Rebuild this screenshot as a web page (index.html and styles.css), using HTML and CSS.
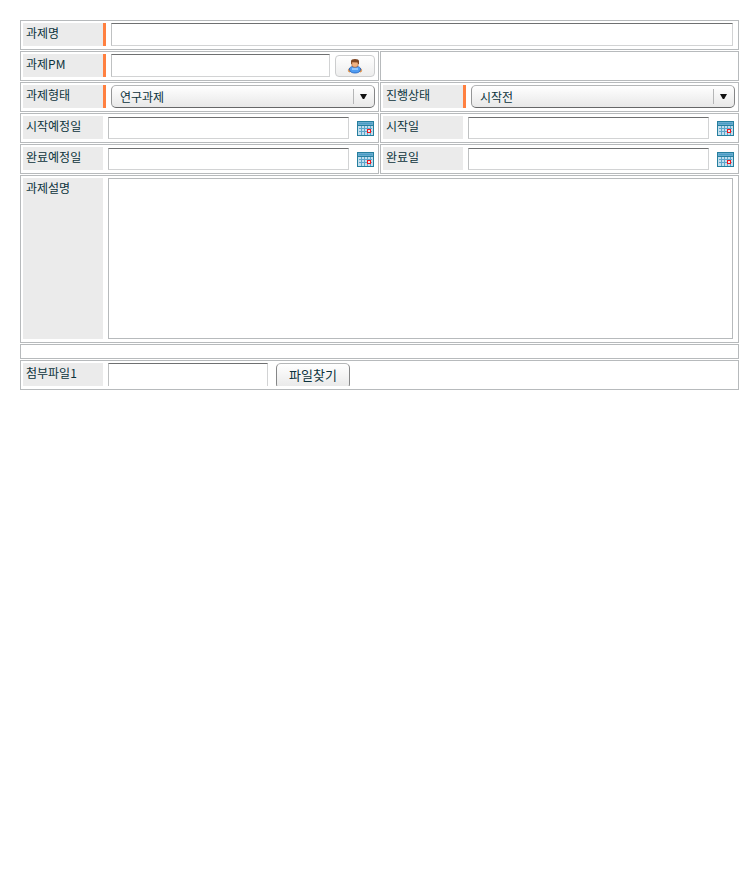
FILE: index.html
```
<!DOCTYPE html>
<html lang="ko">
<head>
<meta charset="utf-8">
<title>과제</title>
<link rel="stylesheet" href="styles.css">
</head>
<body>
<svg width="0" height="0" class="defs">
  <defs>
    <symbol id="calendar" viewBox="0 0 17 15" shape-rendering="crispEdges">
      <path fill="#267f9e" d="M0 0h17v15H0z"/>
      <path fill="#69acd0" d="M1 1h15v3H1z"/>
      <path fill="#4c9dc5" d="M2 2h13v1H2z"/>
      <path fill="#c3dfee" d="M1 5h15v9H1z"/>
      <path fill="#5da5ca" d="M4 5h1v9H4zM7 5h1v9H7zM10 5h1v9h-1zM13 5h1v9h-1zM2 7h13v1H2zM2 10h13v1H2z"/>
      <path fill="#f5151d" d="M10 8h4v4h-4z"/>
      <path fill="#e3eef4" d="M11 9h2v2h-2z"/>
    </symbol>
  </defs>
</svg>
<form class="form">
  <div class="cell wide"><label class="label required">과제명</label><input class="field" type="text"></div>

  <div class="cell"><label class="label required">과제PM</label><input class="field pm" type="text"><button class="person" type="button"><svg width="16" height="16" viewBox="0 0 16 16">
    <path fill="#f2a04e" stroke="#c2702c" stroke-width=".5" d="M1.300 12.500c0-1.300.8-2.200 1.800-2.400v4C2 14.200 1.300 13.600 1.300 12.500zM14.700 12.500c0-1.300-.8-2.200-1.800-2.400v4c1.100.1 1.800-.5 1.800-1.600z"/>
    <path fill="#4f9cf2" stroke="#2463bd" stroke-width=".8" d="M2.200 11C3 9.200 4.500 8.400 6 8.400h4c1.500 0 3 .8 3.800 2.600L13 13c-1 1.500-2.800 2-5 2s-4-.5-5-2z"/>
    <path fill="#8fc6ff" d="M5 10h6v2H5z"/>
    <path fill="#f0b180" stroke="#9a572b" stroke-width=".6" d="M4.800 4h6.400v2.500C11.200 8.300 10 9.300 8 9.300S4.800 8.300 4.800 6.500z"/>
    <path fill="#7f4622" d="M4 6V3.300C4 1.800 5.500 1 8 1s4 .8 4 2.300V6h-.9l-.5-1.800L5 4.100 4.800 6z"/>
  </svg></button></div>
  <div class="cell"></div>

  <div class="cell"><label class="label required">과제형태</label><div class="select"><span>연구과제</span><i class="arrow"></i></div></div>
  <div class="cell"><label class="label required">진행상태</label><div class="select"><span>시작전</span><i class="arrow"></i></div></div>

  <div class="cell"><label class="label">시작예정일</label><input class="field date" type="text"><svg class="cal"><use href="#calendar"/></svg></div>
  <div class="cell"><label class="label">시작일</label><input class="field date" type="text"><svg class="cal"><use href="#calendar"/></svg></div>

  <div class="cell"><label class="label">완료예정일</label><input class="field date" type="text"><svg class="cal"><use href="#calendar"/></svg></div>
  <div class="cell"><label class="label">완료일</label><input class="field date" type="text"><svg class="cal"><use href="#calendar"/></svg></div>

  <div class="cell wide"><label class="label">과제설명</label><textarea class="memo"></textarea></div>
  <div class="cell wide"></div>
  <div class="cell wide"><label class="label">첨부파일1</label><div class="upload"><input class="field file" type="text"><button class="browse" type="button">파일찾기</button></div></div>
</form>
</body>
</html>
```
FILE: styles.css
```
* { box-sizing: border-box; }
body {
  margin: 0;
  background: #fff;
  color: #0b333c;
  font: 12px/17px "Noto Sans CJK KR", sans-serif;
}
.defs { position: absolute; }
.form {
  width: 719px;
  margin: 20px 0 0 20px;
  display: grid;
  grid-template-columns: 359px 359px;
  grid-template-rows: repeat(5, 30px) 168px 15px 30px;
  gap: 1px;
}
.cell {
  display: flex;
  align-items: flex-start;
  border: 1px solid #b7babc;
  padding: 2px;
  min-width: 0;
}
.wide { grid-column: span 2; padding-right: 5px; }
.label {
  flex: none;
  align-self: stretch;
  width: 80px;
  max-height: 161px;
  margin: 0 5px 1px 0;
  padding: 1px 0 0 3px;
  background: #ebebeb;
  white-space: nowrap;
}
.required {
  width: 83px;
  border-right: 3px solid #ff8040;
}
.field, .memo {
  display: block;
  flex: 1;
  min-width: 0;
  height: 23px;
  margin: 0;
  padding: 2px 4px;
  border: 1px solid #d2d3d4;
  border-left-color: #bfc1c2;
  border-top-color: #6f7071;
  border-radius: 0;
  background: #fff;
  color: inherit;
  font: inherit;
  outline: none;
}
.pm { flex: none; width: 219px; }
.date { flex: none; width: 241px; height: 22px; margin-top: 1px; }
.memo { height: 161px; border-color: #b7babc; resize: none; }
.cal { width: 17px; height: 15px; margin: 5px 0 0 8px; }
.person {
  width: 40px;
  height: 22px;
  margin: 1px 0 0 5px;
  padding: 0 0 1px;
  display: flex;
  align-items: center;
  justify-content: center;
  border: 1px solid #cccdce;
  border-radius: 4px;
  background: linear-gradient(#fff, #ededed);
}
.select {
  width: 264px;
  height: 23px;
  display: flex;
  align-items: center;
  padding-left: 8px;
  border: 1px solid;
  border-color: #b5b7b8 #858687 #666768 #959697;
  border-radius: 5px;
  background: linear-gradient(#fff, #e8e8e8);
}
.select span { flex: 1; }
.arrow {
  width: 21px;
  height: 15px;
  padding-right: 1px;
  border-left: 1px solid #b5b6b7;
  display: flex;
  align-items: center;
  justify-content: center;
}
.arrow::after {
  content: "";
  width: 7px;
  height: 5px;
  background: #111;
  clip-path: polygon(0 0, 100% 0, 60% 100%, 40% 100%);
}
.upload {
  display: flex;
  flex: 1;
  height: 23px;
  overflow: hidden;
}
.file { flex: none; width: 160px; height: 26px; }
.browse {
  width: 74px;
  height: 26px;
  margin: 0 0 0 8px;
  padding: 0 0 2px;
  border: 1px solid;
  border-color: #b5b7b8 #858687 #666768 #858687;
  border-radius: 5px;
  background: linear-gradient(#fff, #e8e8e8);
  color: inherit;
  font: 13px/22px "Noto Sans CJK KR", sans-serif;
}
```
